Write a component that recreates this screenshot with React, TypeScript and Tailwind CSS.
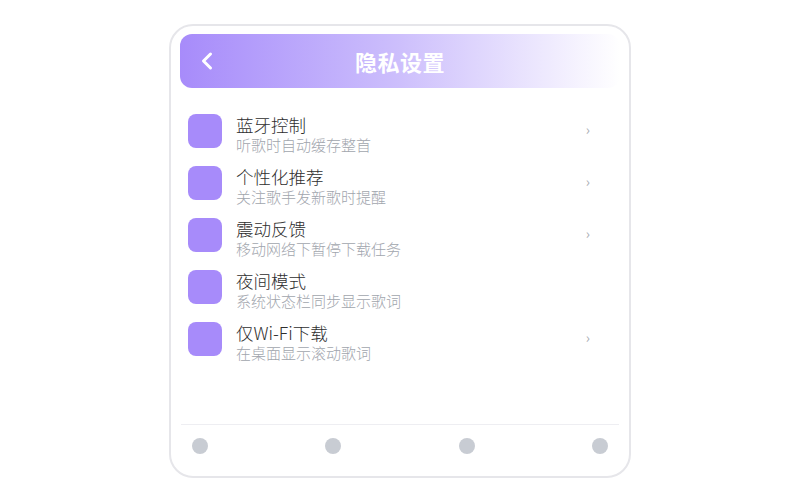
import { ChevronLeft } from "lucide-react";

const items = [
  { title: "蓝牙控制", sub: "听歌时自动缓存整首", arrow: true },
  { title: "个性化推荐", sub: "关注歌手发新歌时提醒", arrow: true },
  { title: "震动反馈", sub: "移动网络下暂停下载任务", arrow: true },
  { title: "夜间模式", sub: "系统状态栏同步显示歌词", arrow: false },
  { title: "仅Wi-Fi下载", sub: "在桌面显示滚动歌词", arrow: true },
];

const font = { fontFamily: '"Noto Sans CJK SC", sans-serif' };

export default function App() {
  return (
    <div className="w-[800px] h-[500px] bg-white flex justify-center pt-6" style={font}>
      <div className="w-[462px] h-[454px] border-2 border-[#e6e6ea] rounded-[24px] pt-2 px-[9px] flex flex-col">
        <header className="h-[54px] rounded-[12px] bg-gradient-to-r from-[#a78bfa] via-[#cdbffc] to-white/0 flex items-center relative">
          <ChevronLeft className="absolute left-[13px] text-white" size={28} strokeWidth={2.6} />
          <h1 className="flex-1 text-center text-white text-[22px] font-bold tracking-[0.5px]">隐私设置</h1>
        </header>
        <ol className="flex flex-col pt-[17px] flex-1">
          {items.map((it) => (
            <li key={it.title} className="h-[52px] flex items-center pl-2 pr-[30px]">
              <div className="w-[34px] h-[34px] rounded-[8px] bg-[#a78bfa] shrink-0" />
              <div className="flex flex-col ml-[14px] flex-1 pt-[5px]">
                <span className="text-[17.5px] leading-[21px] text-[#2e2e2e] font-light">{it.title}</span>
                <span className="text-[15px] leading-[19px] text-[#a1a5ad] font-light">{it.sub}</span>
              </div>
              {it.arrow && <span className="text-[14px] text-[#a8abb2] -mt-[4px]">›</span>}
            </li>
          ))}
        </ol>
        <div className="border-t border-[#eeeef2] mx-[1px] mb-[22px] pt-[13px] px-[11px] flex justify-between">
          {[0, 1, 2, 3].map((i) => (
            <span key={i} className="w-4 h-4 rounded-full bg-[#c8ccd3]" />
          ))}
        </div>
      </div>
    </div>
  );
}
